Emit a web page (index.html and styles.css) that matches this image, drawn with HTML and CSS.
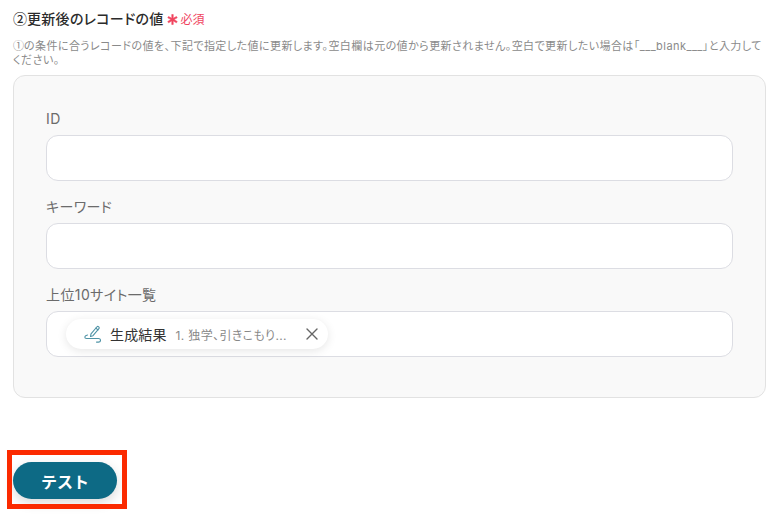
FILE: index.html
```html
<!DOCTYPE html>
<html lang="ja">
<head>
<meta charset="utf-8">
<title>更新後のレコードの値</title>
<link rel="stylesheet" href="styles.css">
</head>
<body>
<main class="page">
  <div class="title-row">
    <span class="title"><span class="jp">②</span>更新後のレコードの値</span>
    <span class="required">
      <svg class="star" width="11" height="11" viewBox="0 0 10 10" fill="#f0455f" stroke="#f0455f" stroke-width="0.500"><path d="M4.300.5h1.400l-.1 3.300 3-1.500.7 1.200-2.900 1.600 2.900 1.700-.7 1.200-3-1.700.1 3.200H4.300l.1-3.200-3 1.700-.7-1.200 2.900-1.700L.7 3.500l.7-1.200 3 1.500z"/></svg>必須
    </span>
  </div>
  <p class="desc"><span class="jp">①</span>の条件に合うレコードの値を、下記で指定した値に更新します。空白欄は元の値から更新されません。空白で更新したい場合は「___blank___」と入力してください。</p>
  <section class="panel">
    <div class="field">
      <div class="label">ID</div>
      <div class="input"></div>
    </div>
    <div class="field">
      <div class="label">キーワード</div>
      <div class="input"></div>
    </div>
    <div class="field">
      <div class="label">上位10サイト一覧</div>
      <div class="input">
        <div class="chip">
          <svg class="chip-icon" width="18" height="19" viewBox="0 0 18 19" fill="none" stroke="#4f93a6" stroke-width="1.100" stroke-linecap="round" stroke-linejoin="round">
            <path d="M8 8.800 13.800 2c.5-.6 1.300-.7 1.900-.2.600.5.700 1.300.2 1.900L10 10.700l-2.500.8z"/>
            <path d="M12.900 3.200 15 5"/>
            <path d="M4.500 10C3 10.400 1.800 11 1.800 12c0 1 .8 1.500 1.700 1.500H15.500c1.300 0 2 .8 2 1.800s-.8 1.800-2 1.800h-2"/>
          </svg>
          <span class="chip-name">生成結果</span>
          <span class="chip-value">1. 独学、引きこもり...</span>
          <svg class="chip-close" width="12" height="12" viewBox="0 0 12 12" fill="none" stroke="#666" stroke-width="1.400" stroke-linecap="round">
            <path d="M1 1 11 11M11 1 1 11"/>
          </svg>
        </div>
      </div>
    </div>
  </section>
  <div class="actions">
    <button class="test-btn" type="button">テスト</button>
    <div class="highlight"></div>
  </div>
</main>
</body>
</html>
```
FILE: styles.css
```css
* { box-sizing: border-box; }
html, body { margin: 0; padding: 0; background: #fff; }
body {
  font-family: Inter, "Noto Sans CJK JP", "Noto Sans", sans-serif;
  font-feature-settings: "palt";
  width: 779px;
  height: 517px;
  overflow: hidden;
}
.jp {
  font-family: "Noto Sans CJK JP", sans-serif;
  font-feature-settings: normal;
  letter-spacing: 0;
}
.page { padding: 9px 13px 0; }
.title-row {
  display: flex;
  align-items: center;
  height: 19px;
}
.title {
  font-size: 14px;
  font-weight: 500;
  line-height: 19px;
  letter-spacing: 0.3px;
  color: #2b2b2b;
}
.required {
  display: flex;
  align-items: center;
  margin-top: 2px;
  margin-left: 3px;
  font-size: 12px;
  color: #f0455f;
  line-height: 19px;
}
.star {
  display: block;
  margin-right: 3px;
}
.desc {
  margin: 10px 0 0;
  width: 753px;
  font-size: 11px;
  line-height: 14px;
  letter-spacing: 0.44px;
  color: #8a8a8a;
}
.panel {
  margin-top: 8px;
  width: 753px;
  height: 323px;
  padding: 33px 32px 0;
  background: #f9f9f9;
  border: 1px solid #e2e2e2;
  border-radius: 12px;
}
.field { margin-bottom: 16px; }
.label {
  height: 20px;
  margin-bottom: 6px;
  font-size: 14px;
  line-height: 20px;
  letter-spacing: 0.4px;
  color: #6b6b6b;
}
.input {
  position: relative;
  height: 46px;
  background: #fff;
  border: 1px solid #dcdde3;
  border-radius: 12px;
}
.chip {
  position: absolute;
  left: 19px;
  top: 7px;
  display: flex;
  align-items: center;
  width: 262px;
  height: 30px;
  padding-left: 17px;
  background: #fff;
  border-radius: 15px;
  box-shadow: 0 2px 10px rgba(0, 0, 0, 0.1);
}
.chip-icon { flex: none; }
.chip-name {
  margin-left: 9px;
  font-size: 14px;
  letter-spacing: 0.15px;
  color: #333;
  white-space: nowrap;
}
.chip-value {
  margin-left: 9px;
  font-size: 12px;
  letter-spacing: 0.35px;
  color: #888;
  white-space: nowrap;
}
.chip-close { flex: none; margin-left: auto; margin-right: 10px; }
.actions {
  position: relative;
  margin-top: 64px;
  width: 104px;
}
.test-btn {
  display: block;
  width: 104px;
  height: 37px;
  padding: 0;
  border: 0;
  border-radius: 19px;
  background: #0d6a85;
  color: #fff;
  font-family: inherit;
  font-feature-settings: normal;
  font-size: 16px;
  font-weight: 700;
  box-shadow: 0 4px 12px rgba(0, 0, 0, 0.15);
}
.highlight {
  position: absolute;
  left: -6px;
  top: -12px;
  width: 120px;
  height: 59px;
  border: 5px solid #fb2a00;
}
```
